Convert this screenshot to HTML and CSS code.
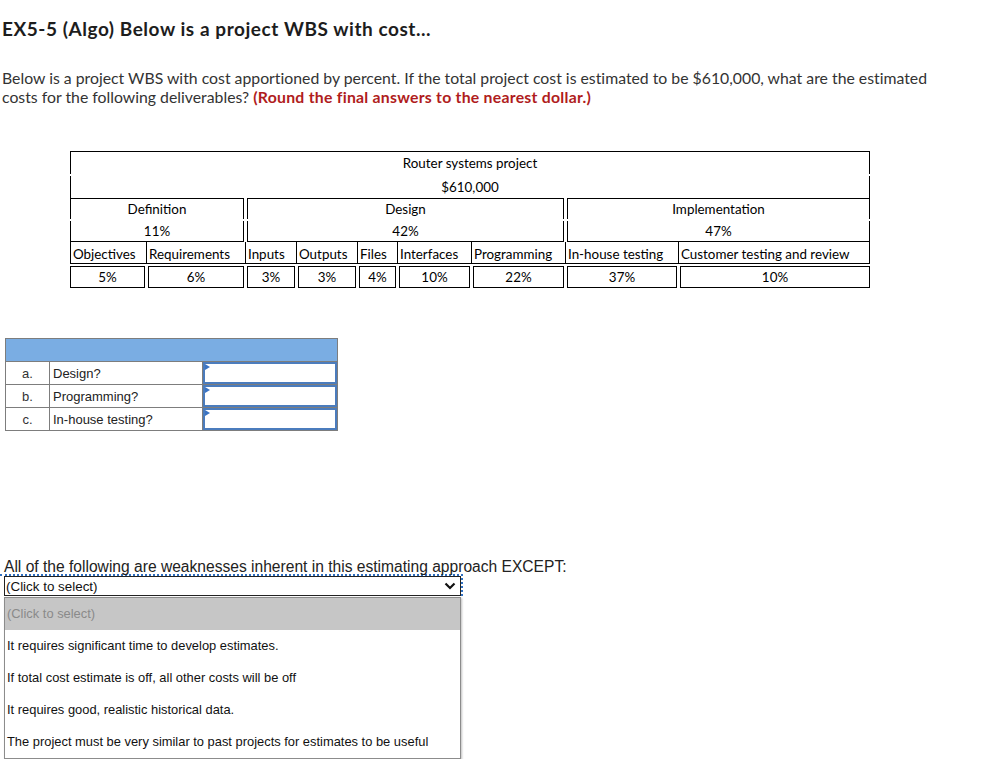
FILE: index.html
```html
<!DOCTYPE html>
<html lang="en">
<head>
<meta charset="utf-8">
<title>EX5-5 (Algo)</title>
<link rel="stylesheet" href="styles.css">
</head>
<body>
<div class="page">
  <h1 class="title">EX5-5 (Algo) Below is a project WBS with cost...</h1>
  <p class="intro">Below is a project WBS with cost apportioned by percent. If the total project cost is estimated to be $610,000, what are the estimated costs for the following deliverables? <strong class="hint">(Round the final answers to the nearest dollar.)</strong></p>

  <div class="wbs">
    <div class="blk root">
      <div class="ln ln-a">Router systems project</div>
      <div class="ln ln-b">$610,000</div>
    </div>
    <div class="blk mid first span-def">
      <div class="ln">Definition</div>
      <div class="ln ln-b">11%</div>
    </div>
    <div class="blk mid span-des">
      <div class="ln">Design</div>
      <div class="ln ln-b">42%</div>
    </div>
    <div class="blk mid last span-imp">
      <div class="ln">Implementation</div>
      <div class="ln ln-b">47%</div>
    </div>

    <div class="name">Objectives</div>
    <div class="name">Requirements</div>
    <div class="name">Inputs</div>
    <div class="name">Outputs</div>
    <div class="name">Files</div>
    <div class="name">Interfaces</div>
    <div class="name">Programming</div>
    <div class="name">In-house testing</div>
    <div class="name end">Customer testing and review</div>

    <div class="pct first">5%</div>
    <div class="pct">6%</div>
    <div class="pct">3%</div>
    <div class="pct">3%</div>
    <div class="pct">4%</div>
    <div class="pct">10%</div>
    <div class="pct">22%</div>
    <div class="pct">37%</div>
    <div class="pct last">10%</div>
  </div>

  <table class="ans">
    <colgroup>
      <col class="c-lbl">
      <col class="c-q">
      <col class="c-inp">
    </colgroup>
    <tr class="hdr"><td colspan="3"></td></tr>
    <tr>
      <td class="lbl">a.</td>
      <td class="q">Design?</td>
      <td class="inp"><div class="field"><span class="flag"></span></div></td>
    </tr>
    <tr>
      <td class="lbl">b.</td>
      <td class="q">Programming?</td>
      <td class="inp"><div class="field"><span class="flag"></span></div></td>
    </tr>
    <tr>
      <td class="lbl">c.</td>
      <td class="q">In-house testing?</td>
      <td class="inp"><div class="field"><span class="flag"></span></div></td>
    </tr>
  </table>

  <p class="question">All of the following are weaknesses inherent in this estimating approach EXCEPT:</p>
  <div class="focus">
    <div class="select">
      <span class="sel-text">(Click to select)</span>
      <svg class="chev" width="12" height="8" viewBox="0 0 12 8"><polyline points="1.5,1.5 6,6 10.5,1.5" fill="none" stroke="#111" stroke-width="2.2"/></svg>
    </div>
  </div>
  <ul class="options">
    <li class="opt current">(Click to select)</li>
    <li class="opt">It requires significant time to develop estimates.</li>
    <li class="opt">If total cost estimate is off, all other costs will be off</li>
    <li class="opt">It requires good, realistic historical data.</li>
    <li class="opt">The project must be very similar to past projects for estimates to be useful</li>
  </ul>
</div>
</body>
</html>
```

FILE: styles.css
```css
html, body {
  margin: 0;
  padding: 0;
  background: #fff;
}

.page {
  font-family: "Liberation Sans", Arial, sans-serif;
}

.title {
  margin: 17px 0 0 2px;
  font-family: Lato, "Open Sans", sans-serif;
  font-weight: 700;
  font-size: 19px;
  letter-spacing: 0.55px;
  line-height: 24px;
  color: #1d1d1d;
}

.intro {
  margin: 27px 0 0 2px;
  width: 945px;
  font-family: Lato, "Open Sans", sans-serif;
  font-size: 15.8px;
  line-height: 19px;
  color: #333;
  font-variant-ligatures: none;
}

.hint {
  color: #b01c20;
  font-weight: 700;
  letter-spacing: 0.25px;
}

/* ---------- WBS ---------- */
.wbs {
  margin: 45px 0 0 70px;
  width: 800px;
  display: grid;
  grid-template-columns: 76px 99px 51px 61px 40px 74px 94px 113px 192px;
  font-family: Lato, "Open Sans", sans-serif;
  font-size: 13.4px;
  color: #000;
}

.blk {
  box-sizing: border-box;
  border-top: 1px solid #000;
}

.root {
  grid-column: 1 / -1;
}

.ln {
  border-left: 1px solid #000;
  border-right: 1px solid #000;
  text-align: center;
  height: 20px;
  line-height: 21px;
}

.root .ln {
  height: 22px;
  line-height: 22px;
}

.ln-b {
  margin-top: 2px;
}

.mid {
  border-bottom: 1px solid #000;
}

.span-def { grid-column: 1 / 3; margin-right: 1px; }
.span-des { grid-column: 3 / 8; margin-left: 2px; margin-right: 1px; }
.span-imp { grid-column: 8 / 10; margin-left: 2px; }

.name {
  box-sizing: border-box;
  height: 22px;
  line-height: 24px;
  border-left: 1px solid #000;
  border-bottom: 1px solid #000;
  padding-left: 2px;
  white-space: nowrap;
  overflow: hidden;
}

.name.end {
  border-right: 1px solid #000;
}

.pct {
  box-sizing: border-box;
  margin: 2px 1px 0 2px;
  height: 22px;
  line-height: 21px;
  border: 1px solid #000;
  text-align: center;
}

.pct.first { margin-left: 0; }
.pct.last { margin-right: 0; }

/* ---------- answer table ---------- */
.ans {
  margin: 50px 0 0 5px;
  border-collapse: collapse;
  width: 332px;
  table-layout: fixed;
  font-size: 13px;
  color: #222;
}

.c-lbl { width: 44px; }
.c-q { width: 153px; }
.c-inp { width: 135px; }

.ans td {
  border: 1px solid #7d7d7d;
  padding: 0;
  height: 22px;
  white-space: nowrap;
}

.ans .hdr td {
  background: #7aade3;
}

.lbl {
  text-align: center;
  color: #333;
}

.ans .q {
  padding-left: 3px;
}

.inp {
  vertical-align: top;
}

.field {
  position: relative;
  box-sizing: border-box;
  height: 22px;
  border: 2px solid #4b7cbd;
  background: #fff;
}

.flag {
  position: absolute;
  left: 0;
  top: 0;
  width: 0;
  height: 0;
  border-left: 5px solid #3b74c4;
  border-top: 3px solid transparent;
  border-bottom: 3px solid transparent;
}

/* ---------- multiple choice ---------- */
.question {
  margin: 127px 0 0 4px;
  font-size: 15.6px;
  line-height: 18px;
  color: #222;
}

.focus {
  box-sizing: border-box;
  width: 463px;
  margin: -2px 0 0 0;
  padding: 0 0 0 4px;
  border-top: 2px dotted #2f6fc0;
  border-right: 2px dotted #2f6fc0;
}

.select {
  box-sizing: border-box;
  width: 457px;
  height: 20px;
  border: 1px solid #222;
  background: #fff;
  display: flex;
  align-items: center;
  justify-content: space-between;
  padding: 0 4px 0 1px;
  font-size: 13.4px;
  color: #111;
}

.chev {
  display: block;
}

.options {
  list-style: none;
  margin: 1px 0 0 4px;
  padding: 0;
  box-sizing: border-box;
  width: 457px;
  border: 1px solid #8c8c8c;
  box-shadow: 1px 1px 2px rgba(0, 0, 0, 0.25);
  background: #fff;
}

.opt {
  height: 32px;
  line-height: 32px;
  padding-left: 2px;
  font-size: 12.9px;
  color: #111;
  white-space: nowrap;
}

.opt.current {
  background: #c6c6c6;
  color: #8a8a8a;
}
```
